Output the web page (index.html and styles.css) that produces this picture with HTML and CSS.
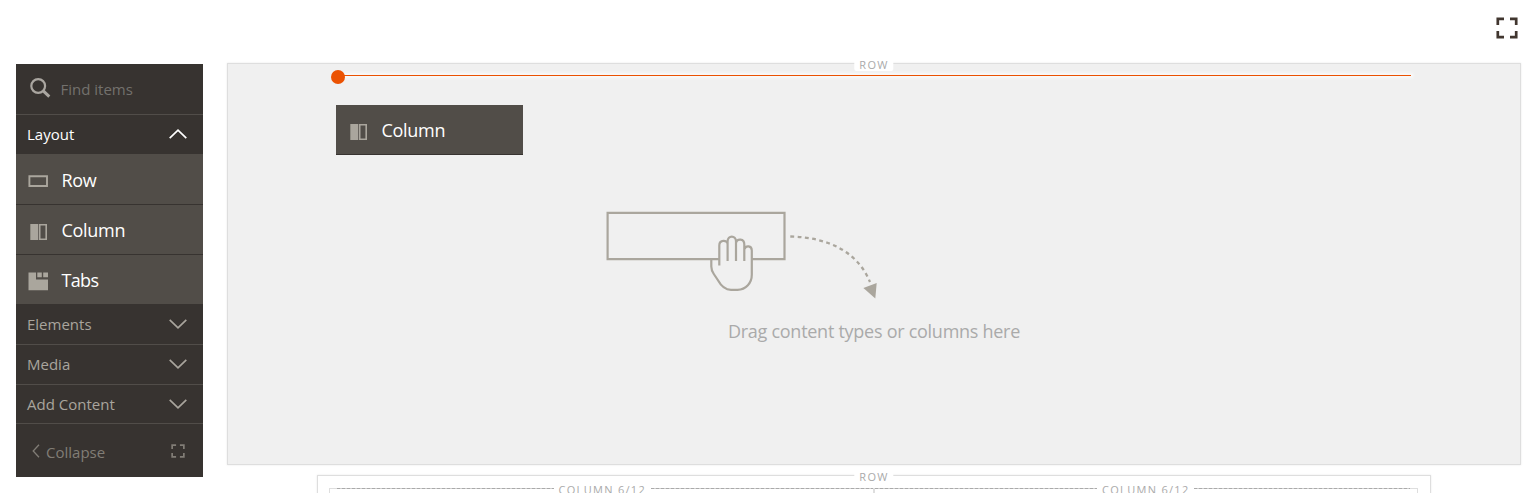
FILE: index.html
```html
<!DOCTYPE html>
<html lang="en">
<head>
<meta charset="utf-8">
<title>Page Builder</title>
<link rel="stylesheet" href="styles.css">
</head>
<body>
<svg class="defs" width="0" height="0" aria-hidden="true">
  <symbol id="column" viewBox="0 0 18 16"><path d="M.3 0h7.900v16H.3z" fill="currentColor"/><path d="M9.700.8h6.500v14.400H9.700z" fill="none" stroke="currentColor" stroke-width="1.600"/></symbol>
  <symbol id="down" viewBox="0 0 18 10"><path d="M.7.8 9 8.8 17.300.8" fill="none" stroke="currentColor" stroke-width="1.700"/></symbol>
  <symbol id="expand" viewBox="0 0 22 22"><path d="M1.800 8V1.800H8M14 1.800h6.200V8M20.200 14v6.200H14M8 20.200H1.800V14" fill="none" stroke="currentColor" stroke-width="2.700"/></symbol>
</svg>
<div class="page">
  <header class="toolbar"><svg class="fullscreen" viewBox="0 0 22 22"><use href="#expand"/></svg></header>
  <div class="workspace">
    <aside class="panel">
      <div class="search">
        <svg class="search-icon" viewBox="0 0 21 20"><circle cx="8.200" cy="8" r="6.900" fill="none" stroke="currentColor" stroke-width="2.200"/><path d="m13 12.700 6.300 6" stroke="currentColor" stroke-width="3"/></svg>
        <span>Find items</span>
      </div>
      <div class="heading open"><span>Layout</span><svg class="chevron up" viewBox="0 0 18 10"><use href="#down"/></svg></div>
      <div class="item"><svg class="item-icon" viewBox="0 0 20 20"><path d="M1.400 5.200h17.600v9.800H1.400z" fill="none" stroke="currentColor" stroke-width="1.900"/></svg><span>Row</span></div>
      <div class="item"><svg class="item-icon" viewBox="0 0 20 20"><use href="#column" x="2" y="3" width="18" height="16"/></svg><span>Column</span></div>
      <div class="item last"><svg class="item-icon" viewBox="0 0 20 20"><path d="M.5 1.500H8v7h12v10.800H.5zM9.300 1.500h4.500v4.800H9.300zM15.200 1.500h4.800v4.800h-4.800z" fill="currentColor"/></svg><span>Tabs</span></div>
      <div class="heading"><span>Elements</span><svg class="chevron" viewBox="0 0 18 10"><use href="#down"/></svg></div>
      <div class="heading"><span>Media</span><svg class="chevron" viewBox="0 0 18 10"><use href="#down"/></svg></div>
      <div class="heading final"><span>Add Content</span><svg class="chevron" viewBox="0 0 18 10"><use href="#down"/></svg></div>
      <div class="collapse">
        <svg class="back" viewBox="0 0 8 14"><path d="M7 .8 1.200 7 7 13.200" fill="none" stroke="currentColor" stroke-width="1.300"/></svg>
        <span>Collapse</span>
        <svg class="expand-small" viewBox="0 0 22 22"><use href="#expand"/></svg>
      </div>
    </aside>
    <main class="stage">
      <section class="row active">
        <span class="label">ROW</span>
        <div class="drop-line"></div>
        <div class="item dragged"><svg class="item-icon" viewBox="0 0 20 20"><use href="#column" x="2" y="3" width="18" height="16"/></svg><span>Column</span></div>
        <svg class="drag-art" viewBox="600 205 290 100" fill="none" stroke="#aaa69d" stroke-width="2.200">
          <path d="M607.600 212.800h176.900v46.300H607.600z"/>
          <path d="M711.300 259.500v7c0 3 .8 5 2.500 7.500l4 6c3.300 6 7.500 9.800 13.200 9.800h6.500c8.500 0 14.200-6.600 14.200-14.500v-24.600c0-5.200-7-5.200-7-.5v-6c0-6-8.300-6-8.300-1v-2c0-6-8.300-6-8.300 0v3c0-5-8.400-5-8.400 1v14.300z" fill="#f0f0f0" stroke="none"/>
          <path d="M719.300 265.500V245.500c0-6 8.300-6 8.300-1v16.500M727.600 245v-3.500c0-6.500 8.400-6.500 8.400 0V261M736 242.800c1-4.500 8.300-4.500 8.300 1.700V261M744.600 249c1.200-4 7.200-3.500 7.200 1.500v24.300c0 8-5.700 15-14.300 15H731c-5.700 0-9.900-3.800-13.200-9.800l-4-6c-1.700-2.500-2.500-4.500-2.500-7.500v-7.400h8"/>
          <path d="M790.300 236.500c38 1 67 15 79.700 45.500" stroke-width="2.300" stroke-dasharray="3.800 3.500"/>
          <path d="m863.400 288 13.300-5-1.400 15.500z" fill="#aaa69d" stroke="none"/>
        </svg>
        <p class="hint">Drag content types or columns here</p>
      </section>
      <section class="row inner">
        <span class="label">ROW</span>
        <div class="columns">
          <div class="column"><i class="dash"></i><span>COLUMN 6/12</span><i class="dash"></i></div>
          <div class="column"><i class="dash"></i><span>COLUMN 6/12</span><i class="dash"></i></div>
        </div>
      </section>
    </main>
  </div>
</div>
</body>
</html>
```
FILE: styles.css
```css
* { box-sizing: border-box; }
body { margin: 0; overflow: hidden; background: #fff; font-family: "Open Sans", "Noto Sans", sans-serif; }
svg { display: block; flex: none; }
.defs { position: absolute; }
.page { height: 493px; overflow: hidden; }
.toolbar { height: 63px; display: flex; justify-content: flex-end; padding: 17px 15px 0 0; }
.fullscreen { width: 22px; height: 22px; color: #41362f; }
.workspace { display: flex; gap: 24px; padding: 0 12px 0 16px; }
.panel { width: 187px; flex: none; height: 413px; margin-top: 1px; background: #373330; color: #a9a59d; font-size: 15px; }
.search { height: 51px; border-bottom: 1px solid #514d49; display: flex; align-items: center; gap: 9.5px; padding-left: 14px; color: #73716d; }
.search-icon { width: 21px; height: 20px; color: #aaa6a0; margin-top: -3px; }
.heading { height: 40px; display: flex; align-items: center; justify-content: space-between; padding: 0 16px 1px 11px; border-bottom: 1px solid #514d49; }
.heading.final { height: 39px; padding-bottom: 0; }
.heading.open { height: 39px; border: 0; color: #fff; padding-bottom: 1px; }
.last + .heading { height: 41px; }
.chevron { width: 18px; height: 10px; }
.up { transform: rotate(180deg); }
.item { height: 51px; background: #514d48; border-bottom: 1px solid #373330; display: flex; align-items: center; gap: 13.5px; padding: 2px 0 0 12px; color: #fff; font-size: 18px; letter-spacing: -.3px; }
.item + .item { height: 50px; padding-top: 1px; }
.item.last { height: 49px; border: 0; letter-spacing: -.65px; }
.item-icon { width: 20px; height: 20px; color: #aaa69d; margin-top: 2px; }
.collapse { display: flex; align-items: center; height: 53px; padding: 2px 18px 0 16px; color: #817d76; gap: 6px; }
.collapse span { flex: 1; }
.back { width: 8px; height: 14px; margin-top: -2px; }
.expand-small { width: 14px; height: 14px; margin-top: -2px; }
.stage { flex: 1; min-width: 0; display: flex; flex-direction: column; gap: 10px; }
.row { position: relative; border: 1px solid #dedede; box-shadow: 0 0 2px #e8e8e8; }
.active { height: 402px; background: #f0f0f0; display: flex; flex-direction: column; align-items: center; }
.label { position: absolute; top: -6px; left: 50%; transform: translateX(-50%); height: 13px; line-height: 13px; padding: 0 5px; background: #fff; border-radius: 2px; color: #aaa; font-size: 11px; letter-spacing: 1.300px; }
.drop-line { position: absolute; left: 110px; right: 109px; top: 11px; height: 1px; background: #eb5202; box-shadow: 0 0 3px 2px #fafafa; }
.drop-line::before { content: ""; position: absolute; left: -7px; top: -5px; width: 14px; height: 14px; border-radius: 50%; background: #eb5202; }
.dragged { position: absolute; left: 108px; top: 41px; width: 187px; height: 50px; padding-top: 0; }
.drag-art { width: 290px; height: 100px; margin: 141px 258px 0 0; }
.hint { margin: 13px 0 0; color: #aaa; font-size: 18px; line-height: 26px; letter-spacing: -.27px; }
.inner { height: 80px; margin: 0 90px; padding: 12px 12px 0 11px; }
.columns { display: grid; grid-template-columns: 1fr 1fr; }
.column { height: 60px; border: 1px solid #dedede; display: flex; align-items: flex-start; padding: 0 0 0 7px; }
.column + .column { padding: 0 7px 0 0; }
.column .dash { flex: 1; height: 1px; margin-top: -1px; background: repeating-linear-gradient(90deg, #aaa 0 3px, #cecece 3px 5px); }
.column .dash:first-child { flex: 0 0 216.5px; }
.column + .column .dash:first-child { flex-basis: 222.5px; }
.column span { margin-top: -7px; height: 15px; line-height: 15px; padding: 0 5px; color: #aaa; background: #fff; font-size: 11px; letter-spacing: 1.300px; }
```
